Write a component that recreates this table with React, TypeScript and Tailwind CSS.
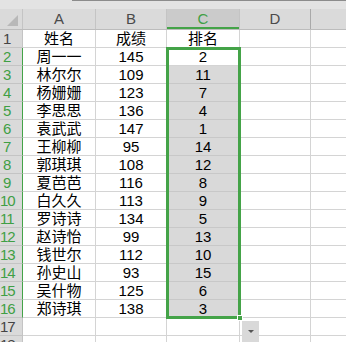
const rows: [string, string, string][] = [
  ["姓名", "成绩", "排名"],
  ["周一一", "145", "2"],
  ["林尔尔", "109", "11"],
  ["杨姗姗", "123", "7"],
  ["李思思", "136", "4"],
  ["袁武武", "147", "1"],
  ["王柳柳", "95", "14"],
  ["郭琪琪", "108", "12"],
  ["夏芭芭", "116", "8"],
  ["白久久", "113", "9"],
  ["罗诗诗", "134", "5"],
  ["赵诗怡", "99", "13"],
  ["钱世尔", "112", "10"],
  ["孙史山", "93", "15"],
  ["吴什物", "125", "6"],
  ["郑诗琪", "138", "3"],
  ["", "", ""],
  ["", "", ""],
];

const font = { fontFamily: '"Liberation Sans", "Noto Sans CJK SC", sans-serif' };

export default function App() {
  return (
    <div className="relative h-[342px] w-[346px] overflow-hidden bg-white text-[15px] text-black" style={font}>
      {/* formula bar edge */}
      <div className="flex h-[9px] bg-[#e3e3e3]">
        <div className="w-[72px]" />
        <div className="h-px flex-1 bg-[#8c8c8c]" />
      </div>

      {/* column headers */}
      <div className="flex h-[21px] border-b border-[#bcbcbc] bg-[#dadada] text-[#4a4a4a]">
        <div className="relative w-[23px] border-r border-[#c4c4c4]">
          <div className="absolute bottom-[3px] right-[4px] h-0 w-0 border-b-[11px] border-l-[11px] border-b-[#b8b8b8] border-l-transparent" />
        </div>
        <div className="flex w-[73px] items-center justify-center border-r border-[#c4c4c4]">A</div>
        <div className="flex w-[71px] items-center justify-center border-r border-[#c4c4c4]">B</div>
        <div className="flex w-[73px] items-center justify-center border-r border-[#c4c4c4] bg-[#cbcbcb] text-[#3f9f45] shadow-[inset_0_-2px_0_#44a348]">C</div>
        <div className="flex w-[71px] items-center justify-center border-r border-[#a9a9a9]">D</div>
        <div className="flex-1" />
      </div>

      {/* rows */}
      {rows.map((r, i) => {
        const n = i + 1;
        const inSel = n >= 2 && n <= 16;
        return (
          <div key={n} className="flex h-[18px]">
            <div
              className={`w-[23px] border-b border-r bg-[#dadada] leading-[17px] ${n >= 10 ? "pl-0 tracking-[-1px]" : "pl-[3px]"} ${
                inSel ? "border-r-[#44a348] border-b-[#c4c4c4] text-[#3f9f45]" : "border-[#c4c4c4] text-[#444]"
              }`}
            >
              {n}
            </div>
            <div className="flex w-[73px] items-center justify-center border-b border-r border-[#d4d4d4] leading-none">{r[0]}</div>
            <div className="flex w-[71px] items-center justify-center border-b border-r border-[#d4d4d4] leading-none">{r[1]}</div>
            <div
              className={`flex w-[73px] items-center justify-center border-b border-r leading-none ${
                n >= 3 && n <= 16 ? "border-[#c8c8c8] bg-[#d9d9d9]" : "border-[#d4d4d4]"
              }`}
            >
              {r[2]}
            </div>
            <div className="w-[71px] border-b border-r border-[#d4d4d4]" />
            <div className="flex-1 border-b border-[#d4d4d4]" />
          </div>
        );
      })}

      {/* selection box */}
      <div className="pointer-events-none absolute left-[166px] top-[47px] h-[272px] w-[75px] border-[3px] border-[#44a348]" />
      <div className="absolute left-[237px] top-[315px] h-[6px] w-[6px] border border-white bg-[#44a348]" />

      {/* auto-fill options */}
      <div className="absolute left-[242px] top-[321px] flex h-[21px] w-[17px] items-center justify-center bg-[#d9d9d9]">
        <div className="h-0 w-0 border-x-[3px] border-t-[3px] border-x-transparent border-t-[#555]" />
      </div>
    </div>
  );
}
